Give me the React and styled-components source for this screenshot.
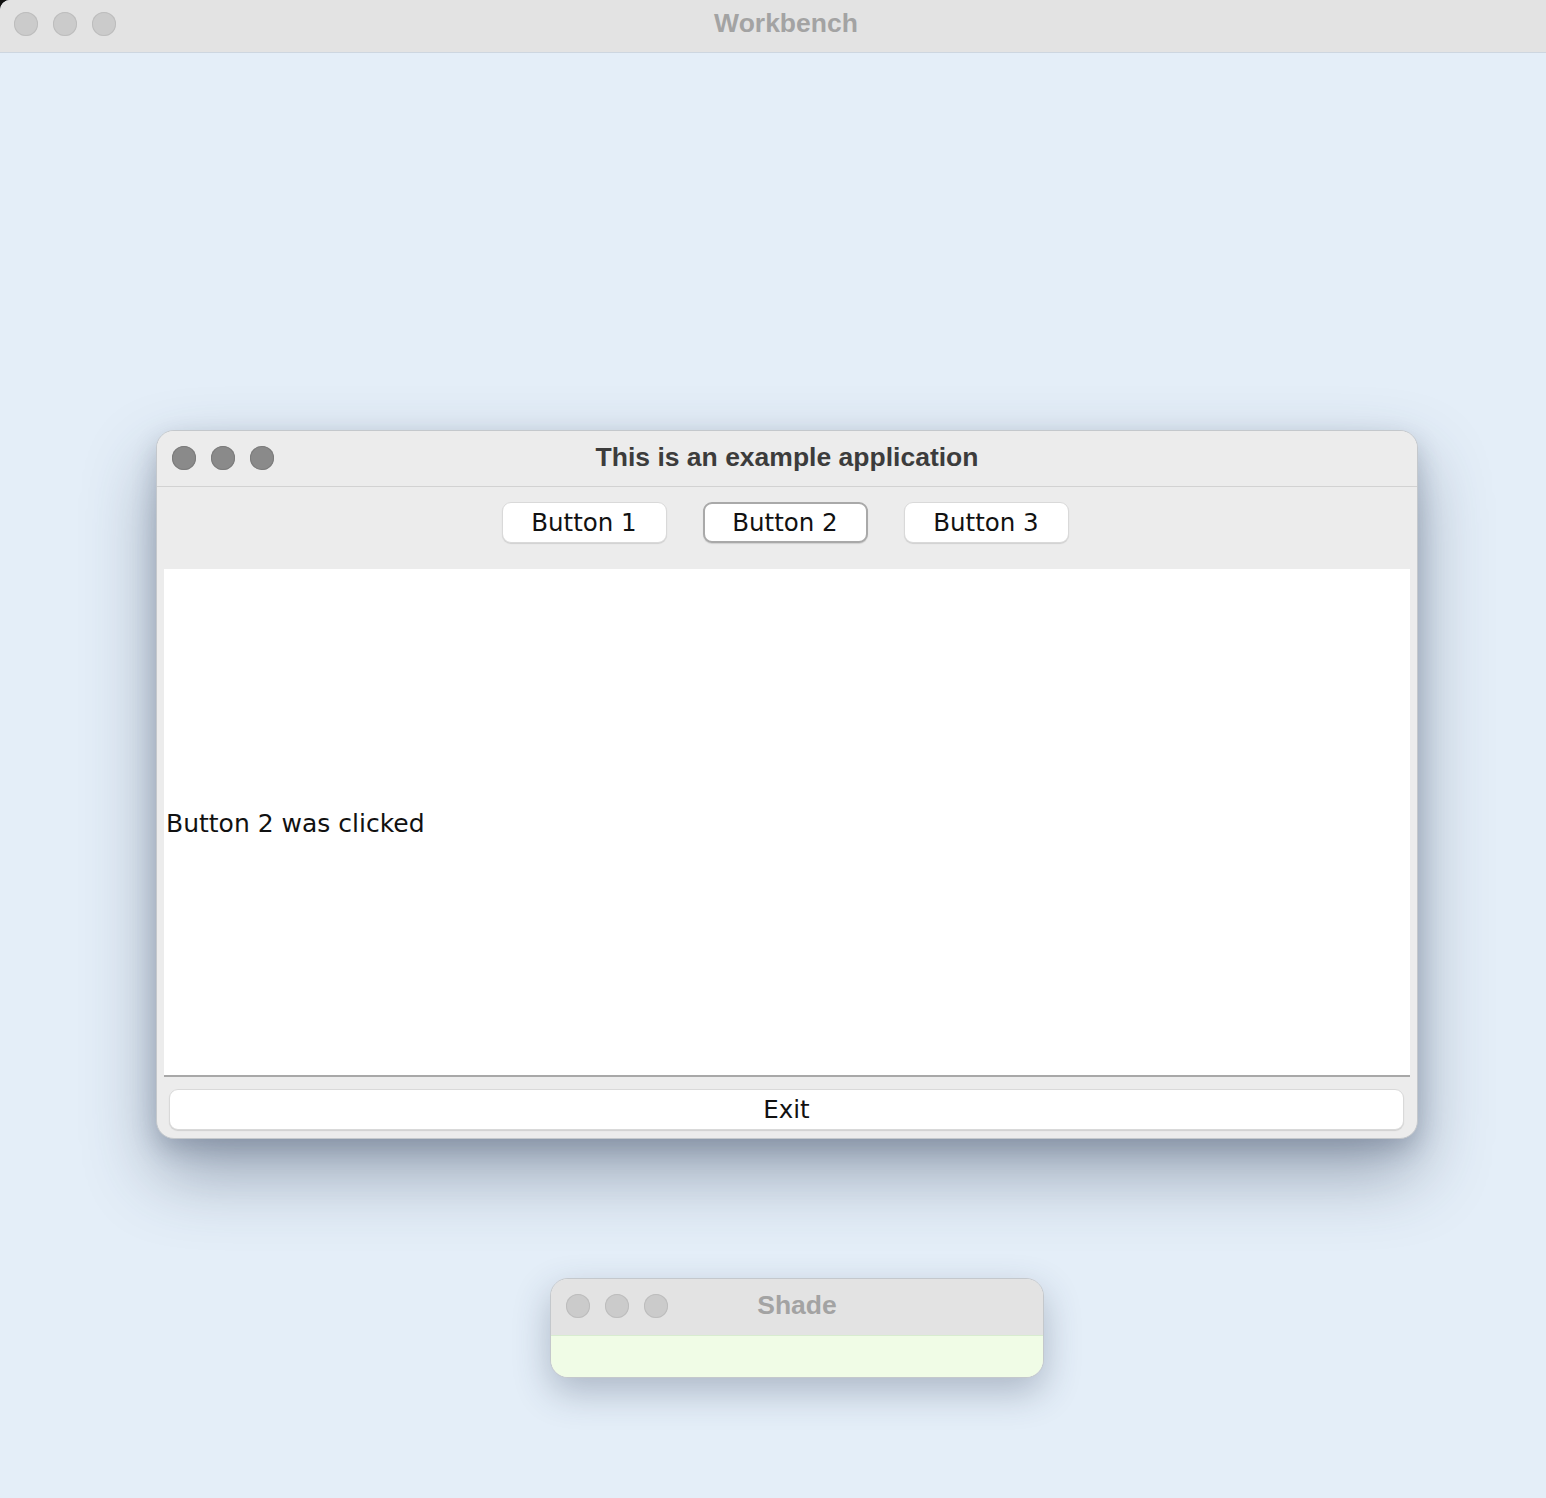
import React from "react";
import styled, { createGlobalStyle } from "styled-components";

const Global = createGlobalStyle`
  html, body { margin: 0; padding: 0; background: #111; }
  body { width: 1546px; height: 1498px; overflow: hidden; font-family: "DejaVu Sans", sans-serif; }
  #root { width: 1546px; height: 1498px; }
`;

const Desktop = styled.div`
  width: 1546px;
  height: 1498px;
  display: flex;
  flex-direction: column;
  background: #e4eef8;
  border-top-left-radius: 10px;
  overflow: hidden;
`;

const TitleBar = styled.div`
  position: relative;
  flex: 0 0 auto;
  height: ${p => p.$h}px;
  display: flex;
  align-items: center;
  padding-left: ${p => p.$pl}px;
  padding-bottom: ${p => p.$pb || 0}px;
  gap: 15px;
  background: ${p => p.$bg};
  border-bottom: 1px solid ${p => p.$line};
  box-sizing: border-box;
`;

const Light = styled.span`
  width: 24px;
  height: 24px;
  border-radius: 50%;
  background: ${p => p.$c};
  box-shadow: inset 0 0 0 1px ${p => p.$b};
  flex: 0 0 auto;
`;

const Title = styled.div`
  position: absolute;
  left: 0;
  right: 0;
  top: 0;
  bottom: ${p => p.$pb || 0}px;
  display: flex;
  align-items: center;
  justify-content: center;
  font-family: "Liberation Sans", Arial, sans-serif;
  font-weight: 700;
  font-size: 26.5px;
  color: ${p => p.$c};
  pointer-events: none;
  padding-left: ${p => p.$shift || 0}px;
`;

const Canvas = styled.div`
  position: relative;
  flex: 1;
`;

const Window = styled.div`
  position: absolute;
  left: ${p => p.$x}px;
  top: ${p => p.$y}px;
  width: ${p => p.$w}px;
  height: ${p => p.$h}px;
  box-sizing: border-box;
  border: 1px solid #c4c8cc;
  border-radius: 18px;
  overflow: hidden;
  display: flex;
  flex-direction: column;
  background: #ececec;
  box-shadow: ${p => p.$shadow};
`;

const Toolbar = styled.div`
  height: 82px;
  box-sizing: border-box;
  display: flex;
  align-items: flex-start;
  justify-content: center;
  gap: 36px;
  padding-top: 15px;
  padding-right: 4px;
`;

const Button = styled.button`
  width: ${p => p.$w || "165px"};
  height: 41px;
  box-sizing: border-box;
  background: #fff;
  border: ${p => (p.$focus ? "2px solid #a9a9a9" : "1px solid #d9d9d9")};
  border-radius: 9px;
  box-shadow: 0 1px 1px rgba(0,0,0,0.12);
  font-family: "DejaVu Sans", sans-serif;
  font-size: 24.5px;
  color: #111;
  padding: 0;
  margin: 0;
  display: flex;
  align-items: center;
  justify-content: center;
`;

const Content = styled.div`
  flex: 0 0 508px;
  margin: 0 7px;
  background: #fff;
  border-bottom: 2px solid #a8a8a8;
  box-sizing: border-box;
  display: flex;
  align-items: center;
  padding-left: 2px;
  padding-top: 2px;
  font-family: "DejaVu Sans", sans-serif;
  font-size: 25px;
  color: #111;
`;

const Footer = styled.div`
  flex: 1;
  display: flex;
  align-items: center;
  padding: 4px 13px 0 12px;
`;

const ShadeBody = styled.div`
  flex: 1;
  background: #f0fce6;
`;

const mainLights = ["#8a8a8a", "#8a8a8a", "#8a8a8a"];
const dimLights = ["#cbcbcb", "#cbcbcb", "#cbcbcb"];

export default function App() {
  return (
    <>
      <Global />
      <Desktop>
        <TitleBar $h={53} $pl={14} $pb={4} $bg="#e3e3e3" $line="#cdd6e0">
          {dimLights.map((c, i) => (
            <Light key={i} $c={c} $b="#bdbdbd" />
          ))}
          <Title $c="#a3a3a3" $pb={5} $shift={26}>Workbench</Title>
        </TitleBar>
        <Canvas>
          <Window
            $x={156}
            $y={377}
            $w={1262}
            $h={709}
            $shadow="0 34px 70px rgba(45,60,85,0.42), 0 10px 24px rgba(45,60,85,0.22)"
          >
            <TitleBar $h={56} $pl={15} $pb={2} $bg="#ececec" $line="#d2d2d2">
              {mainLights.map((c, i) => (
                <Light key={i} $c={c} $b="#7c7c7c" />
              ))}
              <Title $c="#3c3c3c" $pb={2}>This is an example application</Title>
            </TitleBar>
            <Toolbar>
              <Button>Button 1</Button>
              <Button $focus>Button 2</Button>
              <Button>Button 3</Button>
            </Toolbar>
            <Content>Button 2 was clicked</Content>
            <Footer>
              <Button $w="100%">Exit</Button>
            </Footer>
          </Window>
          <Window
            $x={550}
            $y={1225}
            $w={494}
            $h={100}
            $shadow="0 14px 36px rgba(45,60,85,0.3)"
          >
            <TitleBar $h={57} $pl={15} $pb={2} $bg="#e3e3e3" $line="#d8ecd0">
              {dimLights.map((c, i) => (
                <Light key={i} $c={c} $b="#bdbdbd" />
              ))}
              <Title $c="#a3a3a3" $pb={3}>Shade</Title>
            </TitleBar>
            <ShadeBody />
          </Window>
        </Canvas>
      </Desktop>
    </>
  );
}
